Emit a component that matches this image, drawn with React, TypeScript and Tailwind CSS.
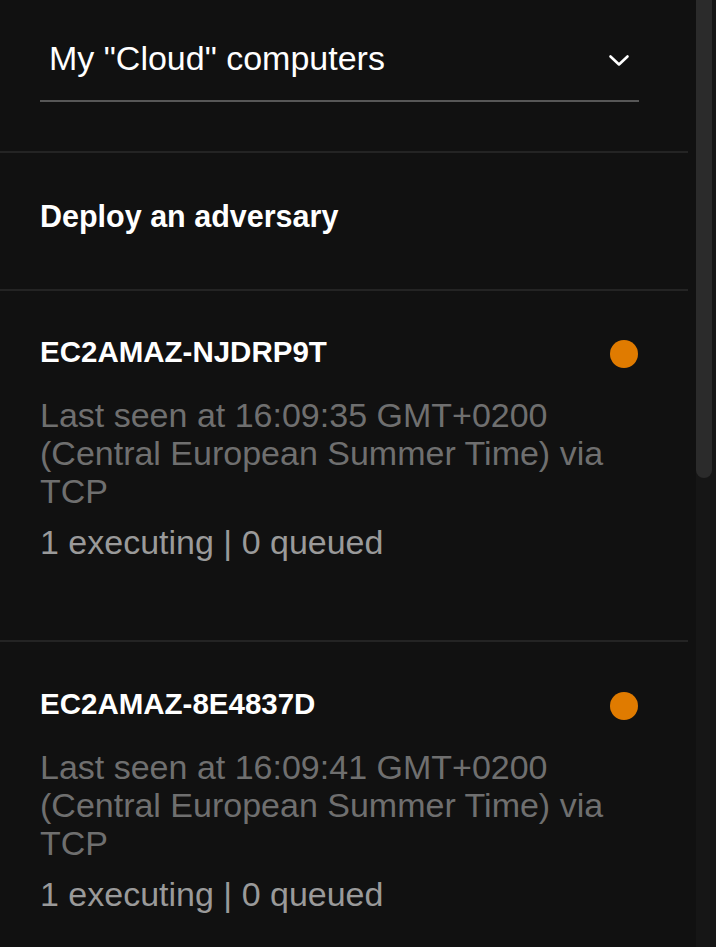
import React from "react";

const font = { fontFamily: '"Liberation Sans", Arial, sans-serif' };

function Dot() {
  return <div className="h-[28px] w-[28px] shrink-0 rounded-full bg-[#e07b00]" />;
}

function Card({ name, time, pt }: { name: string; time: string; pt: string }) {
  return (
    <div className={`border-b-2 border-[#242424] pl-[40px] pr-[50px] ${pt} pb-[79px]`}>
      <div className="flex items-center justify-between">
        <div className="text-[29.5px] font-bold leading-[32px] text-white">{name}</div>
        <div className="mt-[4px]">
          <Dot />
        </div>
      </div>
      <div className="mt-[28px] text-[34px] leading-[38px] text-[#6f6f6f]">
        Last seen at {time} GMT+0200 (Central European Summer Time) via TCP
      </div>
      <div className="mt-[13px] text-[34px] leading-[38px] text-[#9a9a9a]">1 executing | 0 queued</div>
    </div>
  );
}

export default function App() {
  return (
    <div className="flex h-[947px] w-[716px] overflow-hidden bg-[#111111]" style={font}>
      <div className="w-[688px] shrink-0">
        <div className="border-b-2 border-[#242424] pb-[49px] pl-[40px] pr-[49px] pt-[38px]">
          <div className="flex items-center justify-between border-b-2 border-[#575757] pb-[22px] pl-[9px] pr-[9px]">
            <span className="text-[34px] leading-[40px] text-white">My "Cloud" computers</span>
            <svg width="22" height="14" viewBox="0 0 22 14" className="mt-[6px]">
              <path d="M2.5 2.5 L11 10.5 L19.5 2.5" fill="none" stroke="white" strokeWidth="2.6" strokeLinecap="round" strokeLinejoin="round" />
            </svg>
          </div>
        </div>
        <div className="border-b-2 border-[#242424] px-[40px] pb-[55px] pt-[45px]">
          <div className="text-[30.5px] font-bold leading-[36px] text-white">Deploy an adversary</div>
        </div>
        <Card name="EC2AMAZ-NJDRP9T" time="16:09:35" pt="pt-[45px]" />
        <Card name="EC2AMAZ-8E4837D" time="16:09:41" pt="pt-[46px]" />
      </div>
      <div className="ml-[8px] w-[20px] shrink-0 bg-[#161616]">
        <div className="h-[478px] w-[16px] rounded-b-full bg-[#2b2b2b]" />
      </div>
    </div>
  );
}
